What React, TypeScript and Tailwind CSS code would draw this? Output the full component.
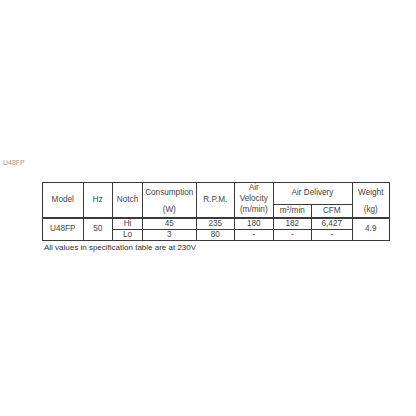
import React from "react";

const bd = "border border-[#3a3a3a]";

export default function App() {
  return (
    <div className="w-[416px] h-[416px] bg-white relative" style={{ fontFamily: '"Liberation Sans", Arial, sans-serif' }}>
      <div className="absolute left-[3px] top-[159px] text-[7px] text-[#9a9a9a] leading-none">U48FP</div>
      <div className="absolute left-[42px] top-[182px]">
        <table className="border-collapse table-fixed text-[8.2px] text-[#444444] text-center leading-none" style={{ width: 347 }}>
          <colgroup>
            <col style={{ width: 40.5 }} />
            <col style={{ width: 29.5 }} />
            <col style={{ width: 30 }} />
            <col style={{ width: 53.5 }} />
            <col style={{ width: 38.5 }} />
            <col style={{ width: 38.5 }} />
            <col style={{ width: 38.5 }} />
            <col style={{ width: 40.5 }} />
            <col style={{ width: 37.5 }} />
          </colgroup>
          <thead>
            <tr className="h-[21.5px]">
              <th rowSpan={2} className={`${bd} font-normal p-0 border-b-2`}>Model</th>
              <th rowSpan={2} className={`${bd} font-normal p-0 border-b-2`}>Hz</th>
              <th rowSpan={2} className={`${bd} font-normal p-0 border-b-2`}>Notch</th>
              <th rowSpan={2} className={`${bd} font-normal p-0 border-b-2`}>
                <div className="flex flex-col">
                  <span className="h-[21px] flex items-center justify-center">Consumption</span>
                  <span className="h-[13px] flex items-center justify-center">(W)</span>
                </div>
              </th>
              <th rowSpan={2} className={`${bd} font-normal p-0 border-b-2`}>R.P.M.</th>
              <th rowSpan={2} className={`${bd} font-normal p-0 border-b-2`}>
                <div className="flex flex-col">
                  <span className="h-[21px] flex flex-col items-center justify-center gap-[2.5px]">
                    <span>Air</span>
                    <span>Velocity</span>
                  </span>
                  <span className="h-[13px] flex items-center justify-center">(m/min)</span>
                </div>
              </th>
              <th colSpan={2} className={`${bd} font-normal p-0`}>Air Delivery</th>
              <th rowSpan={2} className={`${bd} font-normal p-0 border-b-2`}>
                <div className="flex flex-col">
                  <span className="h-[21px] flex items-center justify-center">Weight</span>
                  <span className="h-[13px] flex items-center justify-center">(kg)</span>
                </div>
              </th>
            </tr>
            <tr className="h-[13px]">
              <th className={`${bd} font-normal p-0 border-b-2`}>
                m<span className="relative -top-[3px] text-[5px]">3</span>/min
              </th>
              <th className={`${bd} font-normal p-0 border-b-2`}>CFM</th>
            </tr>
          </thead>
          <tbody>
            <tr className="h-[11.5px]">
              <td rowSpan={2} className={`${bd} p-0`}>U48FP</td>
              <td rowSpan={2} className={`${bd} p-0`}>50</td>
              <td className={`${bd} p-0`}>Hi</td>
              <td className={`${bd} p-0`}>45</td>
              <td className={`${bd} p-0`}>235</td>
              <td className={`${bd} p-0`}>180</td>
              <td className={`${bd} p-0`}>182</td>
              <td className={`${bd} p-0`}>6,427</td>
              <td rowSpan={2} className={`${bd} p-0`}>4.9</td>
            </tr>
            <tr className="h-[11px]">
              <td className={`${bd} p-0`}>Lo</td>
              <td className={`${bd} p-0`}>3</td>
              <td className={`${bd} p-0`}>80</td>
              <td className={`${bd} p-0`}>-</td>
              <td className={`${bd} p-0`}>-</td>
              <td className={`${bd} p-0`}>-</td>
            </tr>
          </tbody>
        </table>
        <div className="mt-[2.5px] ml-[2px] text-[8px] text-[#333] leading-none">All values in specification table are at 230V</div>
      </div>
    </div>
  );
}
